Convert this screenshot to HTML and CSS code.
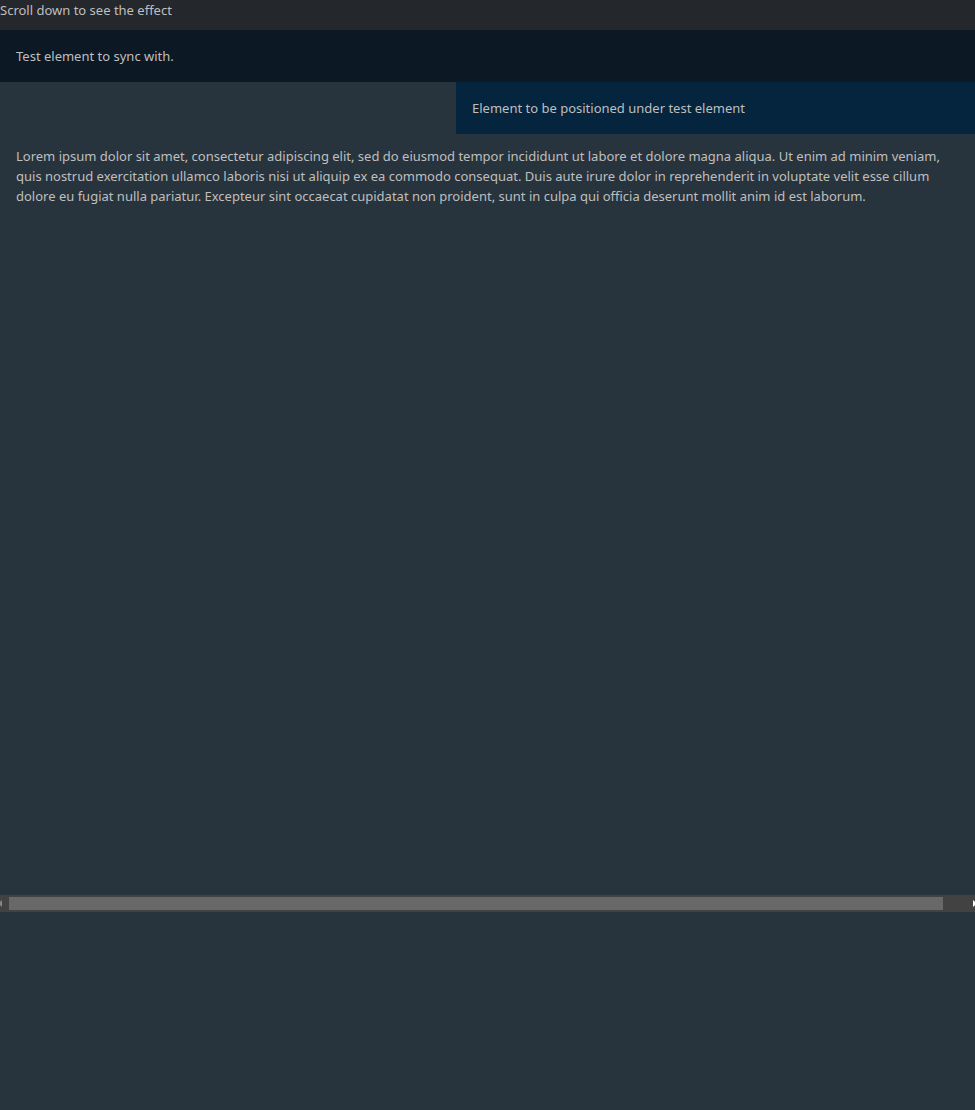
FILE: index.html
```html
<!DOCTYPE html>
<html lang="en">
<head>
<meta charset="utf-8">
<title>Element sync</title>
<link rel="stylesheet" href="styles.css">
</head>
<body>
<header class="hint">Scroll down to see the effect</header>
<main class="demo">
  <div class="test-element">Test element to sync with.</div>
  <div class="synced-row"><div class="synced-element">Element to be positioned under test element</div></div>
  <p class="copy">Lorem ipsum dolor sit amet, consectetur adipiscing elit, sed do eiusmod tempor incididunt ut labore et dolore magna aliqua. Ut enim ad minim veniam, quis nostrud exercitation ullamco laboris nisi ut aliquip ex ea commodo consequat. Duis aute irure dolor in reprehenderit in voluptate velit esse cillum dolore eu fugiat nulla pariatur. Excepteur sint occaecat cupidatat non proident, sunt in culpa qui officia deserunt mollit anim id est laborum.</p>
</main>
<div class="scrollbar">
  <svg class="arrow" width="9" height="17" viewBox="0 0 9 17" aria-hidden="true"><path d="M2 5v7L-2 8.500z" fill="#868686"/></svg>
  <div class="thumb"></div>
  <svg class="arrow" width="9" height="17" viewBox="0 0 9 17" aria-hidden="true"><path d="M7 5v7l4-3.500z" fill="#fff"/></svg>
</div>
<footer class="rest"></footer>
</body>
</html>
```

FILE: styles.css
```css
* {
  box-sizing: border-box;
}

body {
  display: flex;
  flex-direction: column;
  min-height: 100vh;
  margin: 0;
  background: #28343d;
  color: #bfbfbf;
  font: 13px/20px "Noto Sans", "Open Sans", sans-serif;
}

.hint {
  height: 30px;
  background: #24272c;
}

.demo {
  flex: 1;
}

.test-element {
  padding: 16px;
  background: #0c1925;
}

.synced-row {
  display: flex;
  justify-content: flex-end;
}

.synced-element {
  flex: 0 0 519px;
  padding: 16px;
  background: #05253e;
}

.copy {
  margin: 0;
  padding: 12px 16px;
}

.scrollbar {
  display: flex;
  height: 17px;
  background: #424242;
  overflow: hidden;
}

.thumb {
  flex: 1;
  margin: 2px 23px 2px 0;
  background: #686868;
}

.arrow {
  flex: none;
}

.rest {
  height: 198px;
}
```
